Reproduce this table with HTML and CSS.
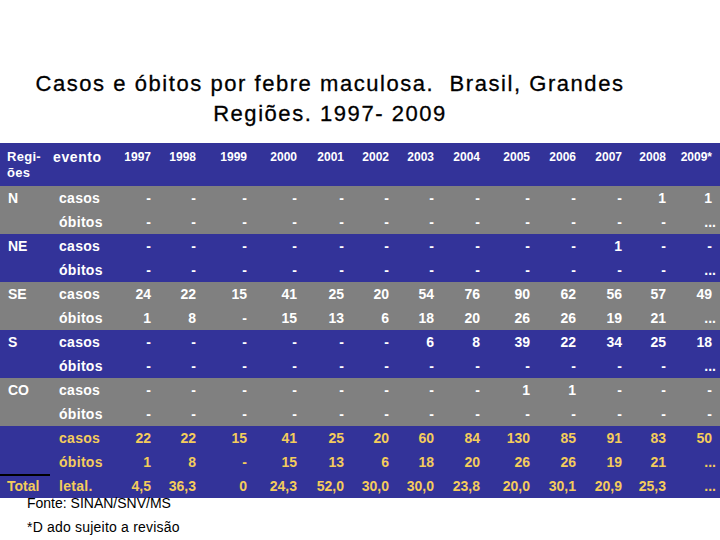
FILE: index.html
```html
<!DOCTYPE html>
<html lang="pt">
<head>
<meta charset="utf-8">
<title>Casos e óbitos por febre maculosa</title>
<link rel="stylesheet" href="styles.css">
</head>
<body>
<div class="page">
  <h1 class="title">Casos e óbitos por febre maculosa.&nbsp; Brasil, Grandes<br>Regiões. 1997- 2009</h1>
  <table class="data">
    <colgroup>
      <col class="c-reg"><col class="c-ev">
      <col style="width:46px"><col style="width:45px"><col style="width:51px"><col style="width:50px">
      <col style="width:47px"><col style="width:45px"><col style="width:45px"><col style="width:46px">
      <col style="width:50px"><col style="width:46px"><col style="width:46px"><col style="width:44px">
      <col style="width:46px"><col style="width:8px">
    </colgroup>
    <thead>
      <tr class="head">
        <th class="reg">Regi-<br>ões</th><th class="ev">evento</th>
        <th>1997</th><th>1998</th><th>1999</th><th>2000</th><th>2001</th><th>2002</th><th>2003</th>
        <th>2004</th><th>2005</th><th>2006</th><th>2007</th><th>2008</th><th>2009*</th><th></th>
      </tr>
    </thead>
    <tbody class="gray">
      <tr><td class="reg">N</td><td class="ev">casos</td><td>-</td><td>-</td><td>-</td><td>-</td><td>-</td><td>-</td><td>-</td><td>-</td><td>-</td><td>-</td><td>-</td><td>1</td><td>1</td><td></td></tr>
      <tr><td class="reg"></td><td class="ev">óbitos</td><td>-</td><td>-</td><td>-</td><td>-</td><td>-</td><td>-</td><td>-</td><td>-</td><td>-</td><td>-</td><td>-</td><td>-</td><td><span class="dots">...</span></td><td></td></tr>
    </tbody>
    <tbody class="blue">
      <tr><td class="reg">NE</td><td class="ev">casos</td><td>-</td><td>-</td><td>-</td><td>-</td><td>-</td><td>-</td><td>-</td><td>-</td><td>-</td><td>-</td><td>1</td><td>-</td><td>-</td><td></td></tr>
      <tr><td class="reg"></td><td class="ev">óbitos</td><td>-</td><td>-</td><td>-</td><td>-</td><td>-</td><td>-</td><td>-</td><td>-</td><td>-</td><td>-</td><td>-</td><td>-</td><td><span class="dots">...</span></td><td></td></tr>
    </tbody>
    <tbody class="gray">
      <tr><td class="reg">SE</td><td class="ev">casos</td><td>24</td><td>22</td><td>15</td><td>41</td><td>25</td><td>20</td><td>54</td><td>76</td><td>90</td><td>62</td><td>56</td><td>57</td><td>49</td><td></td></tr>
      <tr><td class="reg"></td><td class="ev">óbitos</td><td>1</td><td>8</td><td>-</td><td>15</td><td>13</td><td>6</td><td>18</td><td>20</td><td>26</td><td>26</td><td>19</td><td>21</td><td><span class="dots">...</span></td><td></td></tr>
    </tbody>
    <tbody class="blue">
      <tr><td class="reg">S</td><td class="ev">casos</td><td>-</td><td>-</td><td>-</td><td>-</td><td>-</td><td>-</td><td>6</td><td>8</td><td>39</td><td>22</td><td>34</td><td>25</td><td>18</td><td></td></tr>
      <tr><td class="reg"></td><td class="ev">óbitos</td><td>-</td><td>-</td><td>-</td><td>-</td><td>-</td><td>-</td><td>-</td><td>-</td><td>-</td><td>-</td><td>-</td><td>-</td><td><span class="dots">...</span></td><td></td></tr>
    </tbody>
    <tbody class="gray">
      <tr><td class="reg">CO</td><td class="ev">casos</td><td>-</td><td>-</td><td>-</td><td>-</td><td>-</td><td>-</td><td>-</td><td>-</td><td>1</td><td>1</td><td>-</td><td>-</td><td>-</td><td></td></tr>
      <tr><td class="reg"></td><td class="ev">óbitos</td><td>-</td><td>-</td><td>-</td><td>-</td><td>-</td><td>-</td><td>-</td><td>-</td><td>-</td><td>-</td><td>-</td><td>-</td><td>-</td><td></td></tr>
    </tbody>
    <tbody class="blue total">
      <tr><td class="reg"></td><td class="ev">casos</td><td>22</td><td>22</td><td>15</td><td>41</td><td>25</td><td>20</td><td>60</td><td>84</td><td>130</td><td>85</td><td>91</td><td>83</td><td>50</td><td></td></tr>
      <tr><td class="reg"></td><td class="ev">óbitos</td><td>1</td><td>8</td><td>-</td><td>15</td><td>13</td><td>6</td><td>18</td><td>20</td><td>26</td><td>26</td><td>19</td><td>21</td><td><span class="dots">...</span></td><td></td></tr>
      <tr><td class="reg rule">Total</td><td class="ev">letal.</td><td>4,5</td><td>36,3</td><td>0</td><td>24,3</td><td>52,0</td><td>30,0</td><td>30,0</td><td>23,8</td><td>20,0</td><td>30,1</td><td>20,9</td><td>25,3</td><td><span class="dots">...</span></td><td></td></tr>
    </tbody>
  </table>
  <div class="notes">
    <p>Fonte: SINAN/SNV/MS</p>
    <p class="rev">*D ado sujeito a revisão</p>
  </div>
</div>
</body>
</html>
```

FILE: styles.css
```css
html, body {
  margin: 0;
  padding: 0;
  background: #ffffff;
}

.page {
  width: 720px;
  height: 540px;
  overflow: hidden;
  display: flex;
  flex-direction: column;
  font-family: "Liberation Sans", Arial, sans-serif;
}

.title {
  margin: 69px 0 0 0;
  width: 660px;
  text-align: center;
  font-size: 22px;
  font-weight: normal;
  letter-spacing: 1.55px;
  line-height: 30px;
  color: #000000;
  -webkit-text-stroke: 0.3px #000000;
}

.data {
  margin-top: 14px;
  width: 720px;
  table-layout: fixed;
  border-collapse: collapse;
  border-spacing: 0;
  font-weight: bold;
  color: #ffffff;
}

.c-reg { width: 52px; }
.c-ev { width: 53px; }

.data th,
.data td {
  padding: 0;
  text-align: right;
  white-space: nowrap;
}

.head {
  background: #333399;
  height: 43px;
}

.head th {
  vertical-align: top;
  padding-top: 6px;
  font-size: 12px;
  line-height: 16px;
}

.head th.reg,
.head th.ev {
  text-align: left;
  font-size: 13px;
}

.head th.reg { padding-left: 7px; letter-spacing: 0.3px; }
.head th.ev { padding-left: 1px; font-size: 14px; letter-spacing: 0.6px; }

.data tbody tr {
  height: 24px;
}

.data tbody td {
  font-size: 14px;
  line-height: 24px;
  vertical-align: middle;
}

.data td.reg {
  text-align: left;
  padding-left: 8px;
}

.data td.ev {
  text-align: left;
  padding-left: 7px;
  letter-spacing: 0.3px;
}

.dots {
  margin-right: -4px;
}

.gray { background: #808080; }
.blue { background: #333399; }

.total td { color: #f4cc5c; }

.total td.rule {
  padding-left: 7px;
  background: linear-gradient(#000000, #000000) left top / 50px 2px no-repeat;
}

.notes {
  margin-top: -7px;
  padding-left: 27px;
  font-size: 14px;
  line-height: 24px;
  color: #000000;
}

.notes p {
  margin: 0;
}

.notes .rev {
  letter-spacing: 0.2px;
}
```
